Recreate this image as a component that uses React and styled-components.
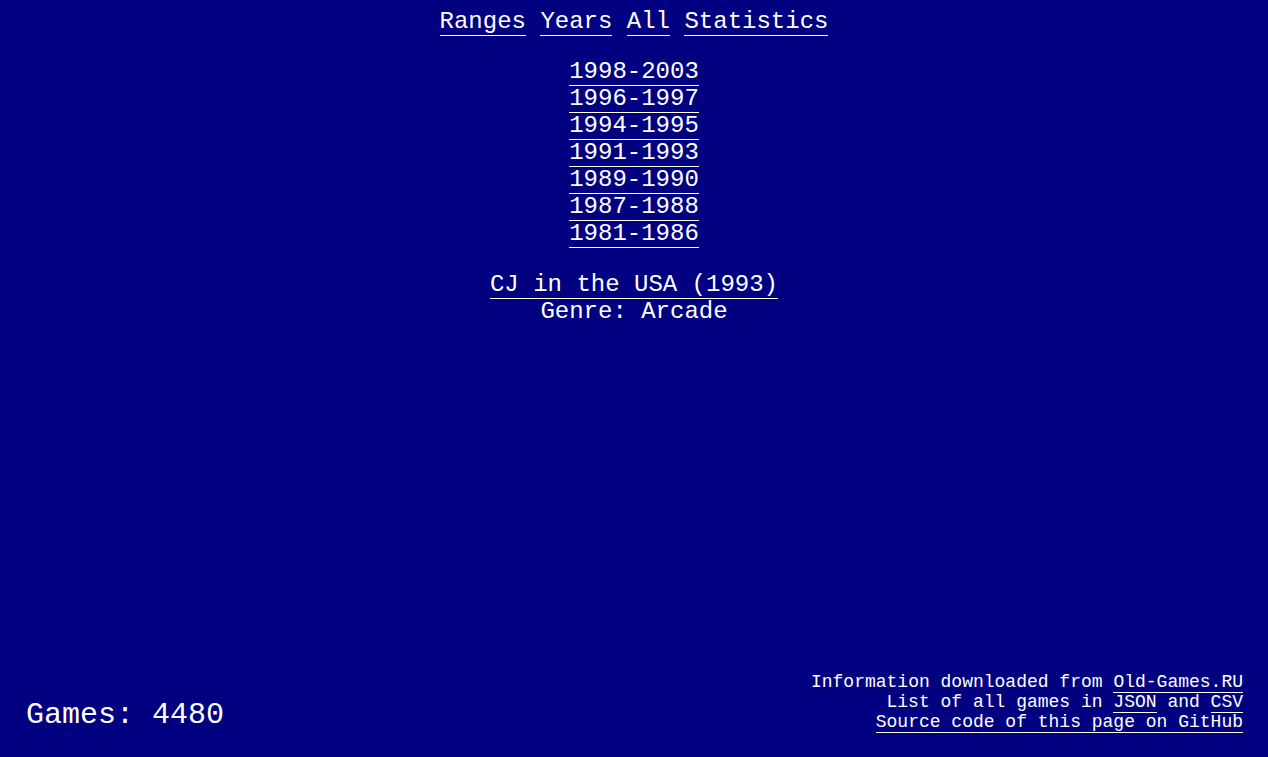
import React from "react";
import styled, { createGlobalStyle } from "styled-components";

const ranges = [
  "1998-2003",
  "1996-1997",
  "1994-1995",
  "1991-1993",
  "1989-1990",
  "1987-1988",
  "1981-1986",
];

const GlobalStyle = createGlobalStyle`
  html, body {
    margin: 0;
    padding: 0;
    background: #000080;
  }
  body {
    color: #ffffff;
    font-family: "Liberation Mono", "Courier New", monospace;
  }
`;

const Page = styled.div`
  min-height: 100vh;
  display: flex;
  flex-direction: column;
  box-sizing: border-box;
  padding-top: 8px;
`;

const Main = styled.main`
  flex: 1;
  text-align: center;
  font-size: 24px;
`;

const Nav = styled.nav`
  margin-bottom: 23px;
`;

const Link = styled.a`
  color: #ffffff;
  text-decoration: none;
  border-bottom: 1px solid #ffffff;
  cursor: pointer;
`;

const RangeList = styled.div`
  margin-bottom: 24px;
`;

const Footer = styled.footer`
  display: flex;
  justify-content: space-between;
  align-items: flex-end;
  padding: 0 25px 25px 26px;
`;

const Counter = styled.div`
  font-size: 30px;
`;

const Credits = styled.div`
  font-size: 18px;
  text-align: right;
`;

export default function App() {
  return (
    <>
      <GlobalStyle />
      <Page>
        <Main>
          <Nav>
            <Link>Ranges</Link> <Link>Years</Link> <Link>All</Link>{" "}
            <Link>Statistics</Link>
          </Nav>
          <RangeList>
            {ranges.map((r) => (
              <div key={r}>
                <Link>{r}</Link>
              </div>
            ))}
          </RangeList>
          <div>
            <Link>CJ in the USA (1993)</Link>
          </div>
          <div>Genre: Arcade</div>
        </Main>
        <Footer>
          <Counter>Games: 4480</Counter>
          <Credits>
            <div>
              Information downloaded from <Link>Old-Games.RU</Link>
            </div>
            <div>
              List of all games in <Link>JSON</Link> and <Link>CSV</Link>
            </div>
            <div>
              <Link>Source code of this page on GitHub</Link>
            </div>
          </Credits>
        </Footer>
      </Page>
    </>
  );
}
